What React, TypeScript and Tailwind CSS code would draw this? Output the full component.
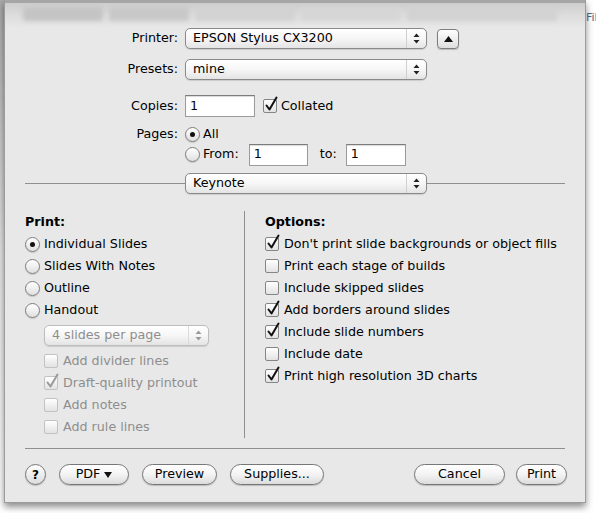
import type { ReactNode } from "react";

const font = "font-['DejaVu_Sans','Liberation_Sans',sans-serif]";

function UpDown({ dim }: { dim?: boolean }) {
  const c = dim ? "#9a9a9a" : "#222";
  return (
    <svg width="7" height="11" viewBox="0 0 7 11">
      <path d="M3.5 0.5 L6.5 4 L0.5 4 Z" fill={c} />
      <path d="M0.5 7 L6.5 7 L3.5 10.5 Z" fill={c} />
    </svg>
  );
}

function Popup({
  text,
  width,
  dim,
}: {
  text: string;
  width: string;
  dim?: boolean;
}) {
  return (
    <div
      className={`flex h-[21px] ${width} shrink-0 items-stretch rounded-[5px] border bg-gradient-to-b from-white via-[#f6f6f6] to-[#e4e4e4] shadow-[0_1px_1px_rgba(0,0,0,0.12)] ${
        dim ? "border-[#bcbcbc] text-[#8e8e8e]" : "border-[#8a8a8a] text-black"
      }`}
    >
      <div className="flex flex-1 items-center pl-[7px]">{text}</div>
      <div
        className={`flex w-[20px] items-center justify-center border-l ${
          dim ? "border-[#dadada]" : "border-[#cfcfcf]"
        }`}
      >
        <UpDown dim={dim} />
      </div>
    </div>
  );
}

function Check({ on, dim }: { on?: boolean; dim?: boolean }) {
  return (
    <div
      className={`relative h-[14px] w-[14px] shrink-0 rounded-[2px] border bg-gradient-to-b from-white to-[#e2e2e2] ${
        dim ? "border-[#c2c2c2]" : "border-[#858585]"
      }`}
    >
      {on && (
        <svg
          className="absolute left-[1px] top-[-4px]"
          width="13"
          height="16"
          viewBox="0 0 13 16"
        >
          <path
            d="M1.5 9.5 L4.5 13.5 L11.5 1.5"
            fill="none"
            stroke={dim ? "#9a9a9a" : "#111"}
            strokeWidth="2"
            strokeLinecap="round"
            strokeLinejoin="round"
          />
        </svg>
      )}
    </div>
  );
}

function Radio({ on }: { on?: boolean }) {
  return (
    <div className="flex h-[15px] w-[15px] shrink-0 items-center justify-center rounded-full border border-[#7f7f7f] bg-gradient-to-b from-white to-[#e0e0e0] shadow-[0_1px_1px_rgba(0,0,0,0.15)]">
      {on && <div className="h-[5px] w-[5px] rounded-full bg-[#111]" />}
    </div>
  );
}

function Field({ value, width }: { value: string; width: string }) {
  return (
    <div
      className={`flex h-[22px] ${width} items-center border border-[#9b9b9b] border-t-[#7c7c7c] bg-white pl-[4px] shadow-[inset_0_1px_1px_rgba(0,0,0,0.15)]`}
    >
      {value}
    </div>
  );
}

function Pill({ children, width }: { children: ReactNode; width: string }) {
  return (
    <div
      className={`flex h-[21px] ${width} items-center justify-center rounded-full border border-[#777] bg-gradient-to-b from-white via-[#f3f3f3] to-[#dcdcdc] shadow-[0_1px_1px_rgba(0,0,0,0.2)]`}
    >
      {children}
    </div>
  );
}

function Row({ children, className = "" }: { children: ReactNode; className?: string }) {
  return <div className={`flex h-[22px] items-center ${className}`}>{children}</div>;
}

function Label({ children }: { children: ReactNode }) {
  return <div className="w-[173px] shrink-0 text-right">{children}</div>;
}

const options: [string, boolean][] = [
  ["Don't print slide backgrounds or object fills", true],
  ["Print each stage of builds", false],
  ["Include skipped slides", false],
  ["Add borders around slides", true],
  ["Include slide numbers", true],
  ["Include date", false],
  ["Print high resolution 3D charts", true],
];

export default function App() {
  return (
    <div
      className={`${font} flex h-[513px] w-[596px] overflow-hidden bg-white text-[12.7px] leading-none text-black`}
    >
      <div className="w-[4px] shrink-0 bg-gradient-to-b from-[#a8a8a8] via-[#e6e6e6] to-white" />

      <div className="flex h-[503px] w-[582px] shrink-0 flex-col border-x border-b border-[#9c9c9c] bg-[#e8e8e8] shadow-[0_4px_7px_rgba(0,0,0,0.45)]">
        {/* blurred toolbar showing through the sheet */}
        <div className="relative h-[28px] shrink-0 overflow-hidden border-t-[3px] border-[#a6a6a6] bg-gradient-to-b from-[#cdcdcd] via-[#dddddd] to-[#e8e8e8]">
          <div className="flex gap-[6px] px-[18px] pt-[4px] blur-[2px]">
            <div className="h-[14px] w-[80px] rounded-[2px] bg-[#c4c4c4]" />
            <div className="h-[14px] w-[80px] rounded-[2px] bg-[#c8c8c8]" />
            <div className="h-[14px] w-[100px] rounded-[2px] bg-[#d2d2d2]" />
            <div className="h-[14px] w-[100px] rounded-[2px] bg-[#d6d6d6]" />
            <div className="h-[14px] w-[150px] rounded-[2px] bg-[#d2d2d2]" />
          </div>
        </div>

        {/* printer / presets */}
        <div className="flex h-[21px] items-center">
          <Label>Printer:</Label>
          <div className="ml-[7px]">
            <Popup text="EPSON Stylus CX3200" width="w-[242px]" />
          </div>
          <div className="ml-[10px] flex h-[20px] w-[22px] items-center justify-center rounded-[4px] border border-[#7d7d7d] bg-gradient-to-b from-white to-[#dedede] shadow-[0_1px_1px_rgba(0,0,0,0.2)]">
            <svg width="9" height="6" viewBox="0 0 9 6">
              <path d="M4.5 0 L9 6 L0 6 Z" fill="#111" />
            </svg>
          </div>
        </div>
        <div className="mt-[10px] flex h-[21px] items-center">
          <Label>Presets:</Label>
          <div className="ml-[7px]">
            <Popup text="mine" width="w-[242px]" />
          </div>
        </div>

        {/* copies / pages */}
        <div className="mt-[15px] flex h-[22px] items-center">
          <Label>Copies:</Label>
          <div className="ml-[7px]">
            <Field value="1" width="w-[70px]" />
          </div>
          <div className="ml-[8px] flex items-center gap-[4px]">
            <Check on />
            <span>Collated</span>
          </div>
        </div>
        <div className="mt-[8px] flex h-[19px] items-center">
          <Label>Pages:</Label>
          <div className="ml-[7px] flex items-center gap-[3px]">
            <Radio on />
            <span>All</span>
          </div>
        </div>
        <div className="flex h-[21px] items-center">
          <div className="w-[173px] shrink-0" />
          <div className="ml-[7px] flex items-center gap-[3px]">
            <Radio />
            <span>From:</span>
          </div>
          <div className="ml-[10px]">
            <Field value="1" width="w-[59px]" />
          </div>
          <span className="ml-[12px]">to:</span>
          <div className="ml-[9px]">
            <Field value="1" width="w-[60px]" />
          </div>
        </div>

        {/* keynote divider */}
        <div className="mt-[8px] flex h-[21px] items-center px-[20px]">
          <div className="h-px w-[160px] shrink-0 bg-[#8f8f8f]" />
          <Popup text="Keynote" width="w-[242px]" />
          <div className="h-px flex-1 bg-[#8f8f8f]" />
        </div>

        {/* print / options columns */}
        <div className="mt-[17px] flex px-[20px]">
          <div className="w-[220px] shrink-0 border-r border-[#8f8f8f]">
            <Row className="font-bold">Print:</Row>
            {[
              ["Individual Slides", true],
              ["Slides With Notes", false],
              ["Outline", false],
              ["Handout", false],
            ].map(([t, on]) => (
              <Row key={t as string} className="gap-[4px]">
                <Radio on={on as boolean} />
                <span>{t as string}</span>
              </Row>
            ))}
            <div className="mt-[4px] pl-[19px]">
              <Popup text="4 slides per page" width="w-[165px]" dim />
            </div>
            <div className="mt-[4px] pl-[19px] text-[#8e8e8e]">
              {[
                ["Add divider lines", false],
                ["Draft-quality printout", true],
                ["Add notes", false],
                ["Add rule lines", false],
              ].map(([t, on]) => (
                <Row key={t as string} className="gap-[5px]">
                  <Check on={on as boolean} dim />
                  <span>{t as string}</span>
                </Row>
              ))}
            </div>
          </div>
          <div className="pl-[20px]">
            <Row className="font-bold">Options:</Row>
            {options.map(([t, on]) => (
              <Row key={t} className="gap-[5px]">
                <Check on={on} />
                <span>{t}</span>
              </Row>
            ))}
          </div>
        </div>

        <div className="mx-[20px] mt-[10px] h-px bg-[#8f8f8f]" />

        {/* buttons */}
        <div className="mt-[15px] flex items-center pl-[20px] pr-[18px]">
          <div className="flex h-[21px] w-[21px] items-center justify-center rounded-full border border-[#777] bg-gradient-to-b from-white to-[#dcdcdc] text-[12px] font-bold shadow-[0_1px_1px_rgba(0,0,0,0.2)]">
            ?
          </div>
          <div className="ml-[13px]">
            <Pill width="w-[70px]">
              <span>PDF</span>
              <svg className="ml-[4px]" width="8" height="6" viewBox="0 0 8 6">
                <path d="M0 0 L8 0 L4 6 Z" fill="#111" />
              </svg>
            </Pill>
          </div>
          <div className="ml-[13px]">
            <Pill width="w-[75px]">Preview</Pill>
          </div>
          <div className="ml-[13px]">
            <Pill width="w-[94px]">Supplies...</Pill>
          </div>
          <div className="flex-1" />
          <Pill width="w-[91px]">Cancel</Pill>
          <div className="ml-[11px]">
            <Pill width="w-[51px]">Print</Pill>
          </div>
        </div>
      </div>

      <div className="flex-1 pt-[12px] text-[11px] text-[#4a5f80]">Fil</div>
    </div>
  );
}
